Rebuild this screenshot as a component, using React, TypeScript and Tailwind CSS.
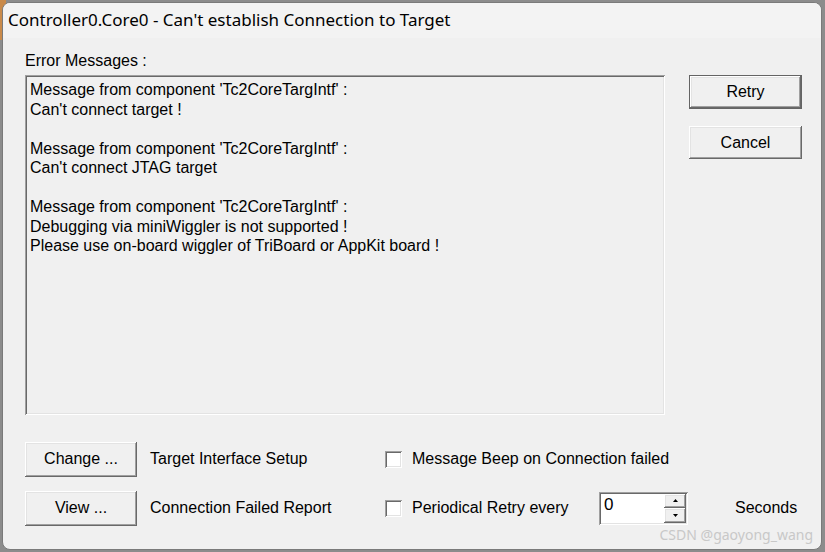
import React from "react";

const raised =
  "shadow-[inset_-1px_-1px_0_#696969,inset_1px_1px_0_#ffffff,inset_-2px_-2px_0_#a0a0a0,inset_2px_2px_0_#e3e3e3]";
const raisedDefault =
  "shadow-[inset_0_0_0_1px_#646464,inset_-2px_-2px_0_#696969,inset_2px_2px_0_#ffffff,inset_-3px_-3px_0_#a0a0a0,inset_3px_3px_0_#e3e3e3]";
const sunken =
  "shadow-[inset_1px_1px_0_#a0a0a0,inset_-1px_-1px_0_#ffffff,inset_2px_2px_0_#696969,inset_-2px_-2px_0_#e3e3e3]";

const bodyFont = { fontFamily: '"Liberation Sans", Arial, sans-serif' };

function Btn({ label, w, h, def }: { label: string; w: string; h: string; def?: boolean }) {
  return (
    <div
      className={`${w} ${h} flex items-center justify-center bg-[#f0f0f0] text-[16px] text-black ${def ? raisedDefault : raised}`}
    >
      {label}
    </div>
  );
}

function Check() {
  return <div className={`w-[17px] h-[17px] bg-white ${sunken} shrink-0`} />;
}

export default function App() {
  const lines = [
    "Message from component 'Tc2CoreTargIntf' :",
    "Can't connect target !",
    "",
    "Message from component 'Tc2CoreTargIntf' :",
    "Can't connect JTAG target",
    "",
    "Message from component 'Tc2CoreTargIntf' :",
    "Debugging via miniWiggler is not supported !",
    "Please use on-board wiggler of TriBoard or AppKit board !",
  ];
  return (
    <div className="w-[825px] h-[552px] bg-[#8c8c8c] relative overflow-hidden">
      <div className="absolute left-0 top-0 w-[6px] h-[40px] bg-[#c98a4a]" />
      <div className="relative ml-[2px] mt-[2px] w-[820px] h-[548px] rounded-[8px] border border-[#7a7a7a] bg-[#f0f0f0] overflow-hidden flex flex-col">
        <div
          className="h-[35px] bg-[#f3f3f3] flex items-center pl-[5px] pb-[1px] text-[17px] text-black"
          style={{ fontFamily: '"Noto Sans", sans-serif' }}
        >
          Controller0.Core0 - Can't establish Connection to Target
        </div>
        <div className="flex flex-col pl-[22px] pt-[14px] text-black text-[16px]" style={bodyFont}>
          <div className="h-[23px] leading-[17px]">Error Messages :</div>
          <div className="flex">
            <div className={`w-[640px] h-[340px] bg-[#f0f0f0] ${sunken} pl-[5px] pt-[5px]`}>
              {lines.map((l, i) => (
                <div key={i} className="h-[19.5px] leading-[19.5px] whitespace-pre">
                  {l || " "}
                </div>
              ))}
            </div>
            <div className="ml-[24px] flex flex-col gap-[17px]">
              <Btn label="Retry" w="w-[113px]" h="h-[34px]" def />
              <Btn label="Cancel" w="w-[113px]" h="h-[33px]" />
            </div>
          </div>
          <div className="mt-[27px] flex items-center h-[34px]">
            <div className="w-[360px] flex items-center">
              <Btn label="Change ..." w="w-[112px]" h="h-[35px]" />
              <span className="ml-[13px]">Target Interface Setup</span>
            </div>
            <Check />
            <span className="ml-[10px]">Message Beep on Connection failed</span>
          </div>
          <div className="mt-[15px] flex items-center h-[34px]">
            <div className="w-[360px] flex items-center">
              <Btn label="View ..." w="w-[112px]" h="h-[35px]" />
              <span className="ml-[13px]">Connection Failed Report</span>
            </div>
            <Check />
            <span className="ml-[10px] w-[187px]">Periodical Retry every</span>
            <div className={`w-[89px] h-[33px] bg-white ${sunken} flex p-[2px]`}>
              <div className="flex-1 pl-[3px] leading-[22px] text-[17px]">0</div>
              <div className="w-[22px] flex flex-col">
                <div className={`flex-1 bg-[#f0f0f0] ${raised} flex items-center justify-center`}>
                  <svg width="5" height="3" viewBox="0 0 5 3"><path d="M2.5 0L5 3H0z" fill="#000" /></svg>
                </div>
                <div className={`flex-1 bg-[#f0f0f0] ${raised} flex items-center justify-center`}>
                  <svg width="5" height="3" viewBox="0 0 5 3"><path d="M0 0H5L2.5 3z" fill="#000" /></svg>
                </div>
              </div>
            </div>
            <span className="ml-[47px]">Seconds</span>
          </div>
        </div>
        <div
          className="absolute right-[8px] bottom-[4px] text-[14px] text-[#c8c8c8]"
          style={{ fontFamily: '"Noto Sans", sans-serif' }}
        >
          CSDN @gaoyong_wang
        </div>
      </div>
    </div>
  );
}
